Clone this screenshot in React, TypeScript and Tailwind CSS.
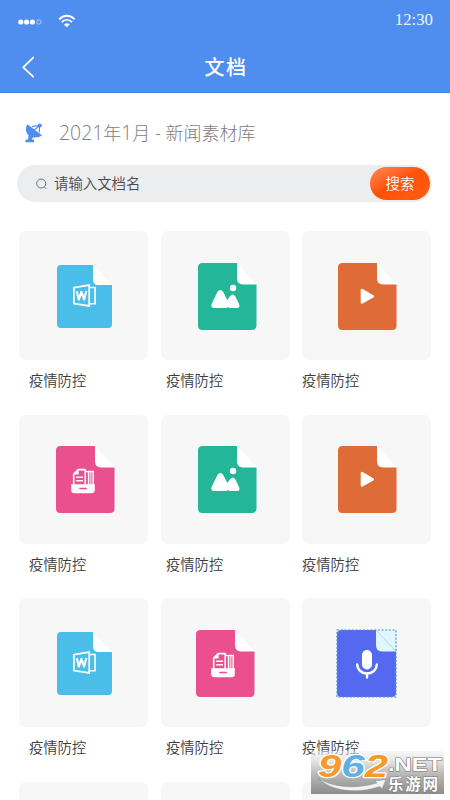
import type { ReactNode } from "react";

type FileKind = "word" | "image" | "video" | "archive" | "audio";

interface DocItem {
  kind: FileKind;
  name: string;
}

const docs: DocItem[] = [
  { kind: "word", name: "疫情防控" },
  { kind: "image", name: "疫情防控" },
  { kind: "video", name: "疫情防控" },
  { kind: "archive", name: "疫情防控" },
  { kind: "image", name: "疫情防控" },
  { kind: "video", name: "疫情防控" },
  { kind: "word", name: "疫情防控" },
  { kind: "archive", name: "疫情防控" },
  { kind: "audio", name: "疫情防控" },
];

const labelIndent = ["pl-[10px]", "pl-[5.5px]", "pl-0"];

function Sheet({ color, children }: { color: string; children: ReactNode }) {
  return (
    <>
      <path d="M39 0 58.5 21.5H45Q39 21.5 39 15Z" fill="#fff" />
      <path
        d="M4.5 0H39V15Q39 21.5 45 21.5H58.5V62.5Q58.5 67 54 67H4.5Q0 67 0 62.5V4.5Q0 0 4.5 0Z"
        fill={color}
      />
      {children}
    </>
  );
}

function WordFile() {
  return (
    <svg className="ml-[1px] h-[63px] w-[55px]" viewBox="0 0 55 63" fill="none">
      <path d="M36 0 55 20H41Q36 20 36 14Z" fill="#fff" />
      <path
        d="M4 0H36V14Q36 20 41 20H55V59Q55 63 51 63H4Q0 63 0 59V4Q0 0 4 0Z"
        fill="#4abde9"
      />
      <path d="M16.9 22.7 32.2 20.1V40.9L16.9 38.5Z" stroke="#fff" strokeWidth="1.7" />
      <path d="M32.2 22.5H38V38.7H32.2" stroke="#fff" strokeWidth="1.6" />
      <path
        d="m19.8 26.3 2 8.3 2.6-7.8 2.7 7.8 2.2-8.5"
        stroke="#fff"
        strokeWidth="2.1"
        strokeLinejoin="round"
      />
    </svg>
  );
}

function ImageFile() {
  return (
    <svg className="ml-[4px] h-[67px] w-[59px]" viewBox="0 0 59 67">
      <Sheet color="#24b699">
        <circle cx="35" cy="25" r="3.2" fill="#fff" />
        <path
          d="M13.8 40.5 19.3 29.2Q22.3 24.6 25.4 29.2L29.3 37 31.8 33.5Q34.8 29.7 37.4 33.5L41 41Q42.6 44.8 39 45H32L30 44.2 28 45H16.5Q12 44.8 13.8 40.5Z"
          fill="#fff"
        />
      </Sheet>
    </svg>
  );
}

function VideoFile() {
  return (
    <svg className="ml-[1px] h-[67px] w-[59px]" viewBox="0 0 59 67">
      <Sheet color="#df6b36">
        <path
          d="M24 27V39.4L34.7 33.3Z"
          fill="#fff"
          stroke="#fff"
          strokeWidth="2.6"
          strokeLinejoin="round"
        />
      </Sheet>
    </svg>
  );
}

function ArchiveFile({ className }: { className: string }) {
  return (
    <svg className={`h-[67px] w-[59px] ${className}`} viewBox="0 0 59 67" fill="none">
      <Sheet color="#ea4f8e">
        <path
          d="M17.7 39V28L22.2 23.6H29.2V39"
          stroke="#fff"
          strokeWidth="1.6"
          strokeLinejoin="round"
        />
        <path d="M17.5 28.6H22.6V23.6Z" fill="#fff" />
        <path d="M20.2 31.3H27M20.2 34.7H27" stroke="#fff" strokeWidth="1.5" />
        <path d="M29 25.4H37.2M32.6 25.4V39M37.2 24.7V39" stroke="#fff" strokeWidth="1.5" />
        <path d="M34.9 25.4V39" stroke="#fff" strokeWidth="1" />
        <path
          d="M15.2 38.3H38.8V44Q38.8 47.3 35.5 47.3H18.5Q15.2 47.3 15.2 44Z"
          fill="#fff"
        />
        <path d="M24 42.5H30.2" stroke="#ea4f8e" strokeWidth="1.7" strokeLinecap="round" />
      </Sheet>
    </svg>
  );
}

function AudioFile() {
  return (
    <svg className="h-[69px] w-[61px]" viewBox="0 0 61 69" fill="none">
      <rect x="1" y="1" width="59" height="67" fill="#dff7fe" />
      <g transform="translate(1 1)">
        <path
          d="M4.5 0H39V15Q39 21.5 45 21.5H59V62.5Q59 67 54.5 67H4.5Q0 67 0 62.5V4.5Q0 0 4.5 0Z"
          fill="#5469ef"
        />
        <path d="M39 0 59 21.5" stroke="#a6cfdf" strokeWidth=".7" />
      </g>
      <rect
        x="1"
        y="1"
        width="59"
        height="67"
        stroke="#5a96cf"
        strokeWidth="1.2"
        strokeDasharray="2.2 1.5"
      />
      <rect x="26" y="21" width="10" height="19.5" rx="5" fill="#fff" />
      <path
        d="M21.2 35.5C22 47.5 40 47.5 40.8 35.5M31 44.5V48.5"
        stroke="#fff"
        strokeWidth="2.4"
        strokeLinecap="round"
      />
    </svg>
  );
}

function FileIcon({ kind, column }: { kind: FileKind; column: number }) {
  switch (kind) {
    case "word":
      return <WordFile />;
    case "image":
      return <ImageFile />;
    case "video":
      return <VideoFile />;
    case "archive":
      return <ArchiveFile className={column === 0 ? "ml-[4px]" : "ml-[1px]"} />;
    case "audio":
      return <AudioFile />;
  }
}

function DocCard({ doc, column }: { doc: DocItem; column: number }) {
  return (
    <div className="h-[183.5px]">
      <div className="flex h-[129px] items-center justify-center rounded-[7px] bg-[#f7f7f7] pt-px">
        <FileIcon kind={doc.kind} column={column} />
      </div>
      <p className={`pt-[9px] text-[14.3px] leading-[21px] font-[350] text-[#3c3c3c] ${labelIndent[column]}`}>
        {doc.name}
      </p>
    </div>
  );
}

function StatusBar() {
  return (
    <div className="flex h-10 items-center justify-between pr-[17px] pl-[18px]">
      <div className="flex items-center gap-4">
        <svg className="mt-1 h-2 w-6" viewBox="0 0 24 8">
          <g fill="#fff">
            <circle cx="2.8" cy="4" r="2.6" />
            <circle cx="8.6" cy="4" r="2.6" />
            <circle cx="14.4" cy="4" r="2.6" />
          </g>
          <circle cx="21" cy="4" r="2.2" fill="none" stroke="#c5dbff" strokeWidth=".8" />
        </svg>
        <svg className="mt-[2px] h-[14px] w-[18px]" viewBox="0 0 18 14" fill="none" stroke="#fff">
          <path d="M1.2 5.3C5.6.6 12.2.6 16.6 5.3" strokeWidth="2" />
          <path d="M3.8 8.2C6.8 5.2 11 5.2 14 8.2" strokeWidth="1.8" />
          <path d="M6 10.4Q8.9 8 11.8 10.4L8.9 13.3Z" fill="#fff" stroke="none" />
        </svg>
      </div>
      <span className="font-['Liberation_Serif',serif] text-[16.8px] leading-10 text-[#f0f6ff]">
        12:30
      </span>
    </div>
  );
}

function Header() {
  return (
    <header className="h-[93px] border-b border-[#4380dc] bg-[#4f8eee]">
      <StatusBar />
      <div className="grid h-[53px] grid-cols-[1fr_auto_1fr] items-center">
        <button className="ml-[20px] w-fit" aria-label="返回">
          <svg className="h-[22px] w-4" viewBox="0 0 16 22" fill="none">
            <path
              d="M13.2 1.6 3.2 11.4 13.2 20.6"
              stroke="#fff"
              strokeWidth="1.9"
              strokeLinecap="round"
              strokeLinejoin="round"
            />
          </svg>
        </button>
        <h1 className="pl-[2px] text-[20px] font-medium tracking-[1.5px] text-white">文档</h1>
      </div>
    </header>
  );
}

function DishIcon() {
  return (
    <svg className="h-5 w-[18px]" viewBox="0 0 18 20" fill="#4f8eee">
      <path d="M2.4 1.2C-.3 5.5.8 10.8 5 13.2 8.5 15.1 13.5 15 17 12.3Z" />
      <path d="M3.8 11.5 3 16.2.4 17V19.2H9V17L6.8 16.1 8.4 13.5Z" />
      <path d="m9.2 7.3 5.2-4.6M7 3.6 14.5 2.5 14.4 9.5" stroke="#4f8eee" strokeWidth="1.2" fill="none" />
      <circle cx="14.8" cy="2.5" r="2" />
    </svg>
  );
}

function SearchBar() {
  return (
    <div className="ml-[17px] flex h-[37px] w-[415px] items-center rounded-full bg-[#ecedef] pr-[2px] pl-[19px]">
      <svg className="h-3 w-3" viewBox="0 0 12 12" fill="none" stroke="#666" strokeWidth=".9">
        <circle cx="5.2" cy="5.5" r="4.5" />
        <path d="m8.4 8.9 2 2.1" />
      </svg>
      <span className="ml-[6px] flex-1 pb-[2px] text-[14.4px] font-[350] text-[#4a4a4a]">
        请输入文档名
      </span>
      <button className="h-[33px] w-[60px] rounded-full bg-linear-to-br from-[#ff8751] via-[#ff5206] via-45% to-[#ff5c14] pb-[2px] text-[14.4px] font-[350] text-white">
        搜索
      </button>
    </div>
  );
}

function Watermark() {
  return (
    <svg
      className="absolute top-[739px] left-[311px] h-[61px] w-[139px]"
      viewBox="0 -12 139 61"
      fontFamily="'Liberation Sans', 'Noto Sans CJK SC', sans-serif"
      fontWeight="700"
    >
      <defs>
        <linearGradient id="mark" x1="0" y1="0" x2="0" y2="1">
          <stop offset="0" stopColor="#f0f0f0" stopOpacity=".5" />
          <stop offset=".5" stopColor="#bdbdbd" />
          <stop offset="1" stopColor="#8c8c8c" />
        </linearGradient>
      </defs>
      <rect width="133" height="43" fill="url(#mark)" />
      <path
        d="M7 27C22 37 46 38 66 32L64 30 75 28.5 71 38 69 35.5C47 43 21 41 7 27Z"
        fill="#f3f3f3"
        stroke="#888"
        strokeWidth=".5"
      />
      <text
        x="7"
        y="26"
        fontStyle="italic"
        fontSize="32"
        textLength="70"
        lengthAdjust="spacingAndGlyphs"
        stroke="#fff"
        strokeWidth="2.4"
        paintOrder="stroke"
        strokeLinejoin="round"
      >
        <tspan fill="#f79a2b">9</tspan>
        <tspan fill="#5fb0e6">6</tspan>
        <tspan fill="#f79a2b">2</tspan>
      </text>
      <g fill="#fff" stroke="#777" strokeWidth="1" paintOrder="stroke">
        <text x="77" y="20" fontSize="18" textLength="54" lengthAdjust="spacingAndGlyphs">
          .NET
        </text>
        <text x="77" y="39" fontSize="15.5" textLength="50">
          乐游网
        </text>
      </g>
    </svg>
  );
}

export default function App() {
  return (
    <div className="relative h-[800px] w-[450px] overflow-hidden bg-white font-['Noto_Sans_CJK_SC',sans-serif]">
      <Header />
      <main>
        <div className="flex h-[72px] items-center gap-4 pt-[7px] pl-[25px]">
          <DishIcon />
          <h2 className="font-['Open_Sans','Noto_Sans_CJK_SC',sans-serif] text-[18px] leading-[27px] font-light text-[#808080]">
            <span className="text-[19.4px]">2021</span>年<span className="text-[19.4px]">1</span>月
            <span> - </span>新闻素材库
          </h2>
        </div>
        <SearchBar />
        <div className="mt-[29px] ml-[19px] grid w-[412px] grid-cols-[repeat(3,129px)] justify-between">
          {docs.map((doc, i) => (
            <DocCard key={i} doc={doc} column={i % 3} />
          ))}
          {/* next row, cut off by the bottom of the screen */}
          {[0, 1, 2].map((i) => (
            <div key={i} className="h-[129px] rounded-[7px] bg-[#f7f7f7]" />
          ))}
        </div>
      </main>
      <Watermark />
    </div>
  );
}
